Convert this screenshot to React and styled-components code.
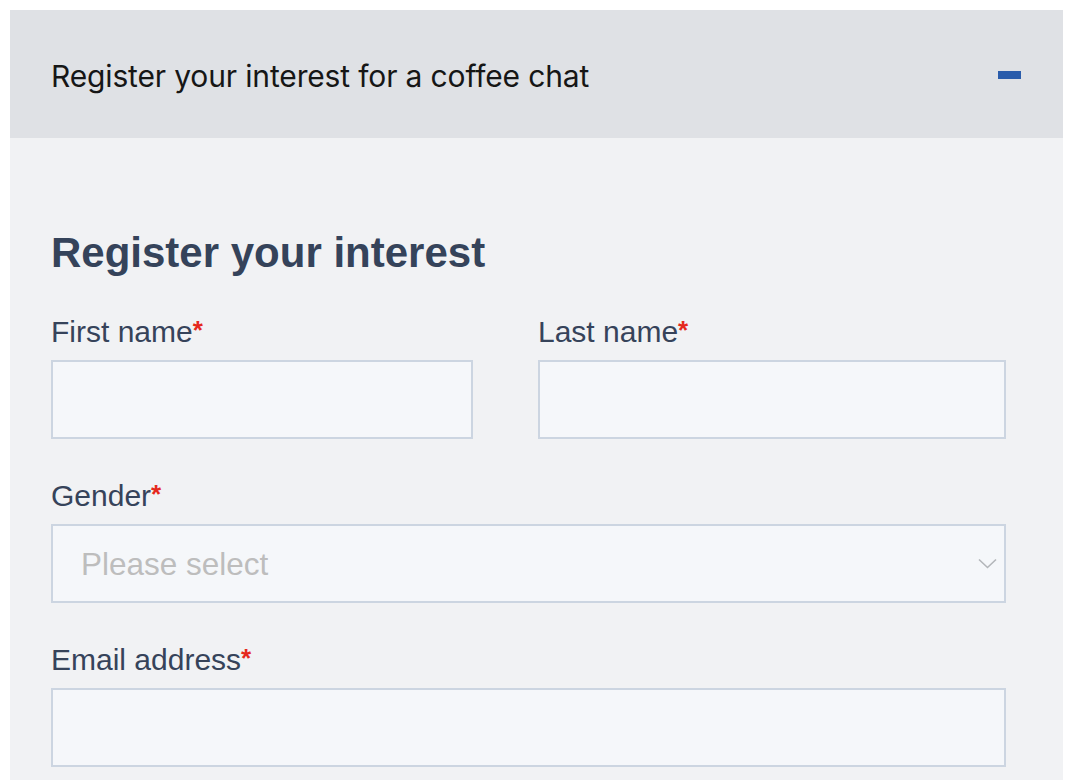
import React from "react";
import styled, { createGlobalStyle } from "styled-components";

const Global = createGlobalStyle`
  html, body { margin: 0; padding: 0; background: #ffffff; }
  body { font-family: "Liberation Sans", Arial, sans-serif; }
  * { box-sizing: border-box; }
`;

const Page = styled.div`
  padding: 10px 7px 0 10px;
`;

const Accordion = styled.section`
  width: 1053px;
`;

const Header = styled.div`
  height: 128px;
  background: #dfe1e5;
  display: flex;
  align-items: center;
  justify-content: space-between;
  padding: 0 42px 0 41px;
`;

const HeaderTitle = styled.h2`
  margin: 0;
  font-family: Inter, "Liberation Sans", sans-serif;
  font-weight: 400;
  font-size: 30px;
  line-height: 36px;
  color: #161616;
  letter-spacing: -0.15px;
  margin-top: 3px;
`;

const Minus = styled.span`
  display: block;
  width: 23px;
  height: 8px;
  background: #2a5cab;
  margin-top: 2px;
`;

const Body = styled.div`
  background: #f1f2f4;
  padding: 90px 57px 60px 41px;
  min-height: 660px;
`;

const Heading = styled.h3`
  margin: 0 0 34px;
  font-size: 42px;
  line-height: 50px;
  font-weight: 700;
  color: #35435a;
`;

const Row = styled.div`
  display: grid;
  grid-template-columns: ${(p) => p.$cols || "1fr"};
  column-gap: 65px;
  margin-bottom: 37px;
`;

const Field = styled.div`
  display: flex;
  flex-direction: column;
`;

const Label = styled.label`
  font-size: 30px;
  line-height: 36px;
  color: #36435a;
  margin-bottom: 10px;
`;

const Req = styled.span`
  color: #e5281d;
  font-weight: 700;
  font-size: 26px;
  vertical-align: 3px;
`;

const Input = styled.div`
  height: 79px;
  background: #f5f7fa;
  border: 2px solid #ccd5e1;
`;

const Select = styled(Input)`
  display: flex;
  align-items: center;
  justify-content: space-between;
  padding: 0 7px 0 28px;
`;

const Placeholder = styled.span`
  font-size: 31.5px;
  color: #bdbdbd;
  margin-top: 2px;
`;

const Chevron = () => (
  <svg width="19" height="11" viewBox="0 0 19 11" fill="none">
    <path d="M1 1.5 L9.5 9.5 L18 1.5" stroke="#b3b6ba" strokeWidth="1.6" />
  </svg>
);

export default function App() {
  return (
    <>
      <Global />
      <Page>
        <Accordion>
          <Header>
            <HeaderTitle>Register your interest for a coffee chat</HeaderTitle>
            <Minus />
          </Header>
          <Body>
            <Heading>Register your interest</Heading>
            <Row $cols="422px 1fr">
              <Field>
                <Label>First name<Req>*</Req></Label>
                <Input />
              </Field>
              <Field>
                <Label>Last name<Req>*</Req></Label>
                <Input />
              </Field>
            </Row>
            <Row>
              <Field>
                <Label>Gender<Req>*</Req></Label>
                <Select>
                  <Placeholder>Please select</Placeholder>
                  <Chevron />
                </Select>
              </Field>
            </Row>
            <Row>
              <Field>
                <Label>Email address<Req>*</Req></Label>
                <Input />
              </Field>
            </Row>
          </Body>
        </Accordion>
      </Page>
    </>
  );
}
